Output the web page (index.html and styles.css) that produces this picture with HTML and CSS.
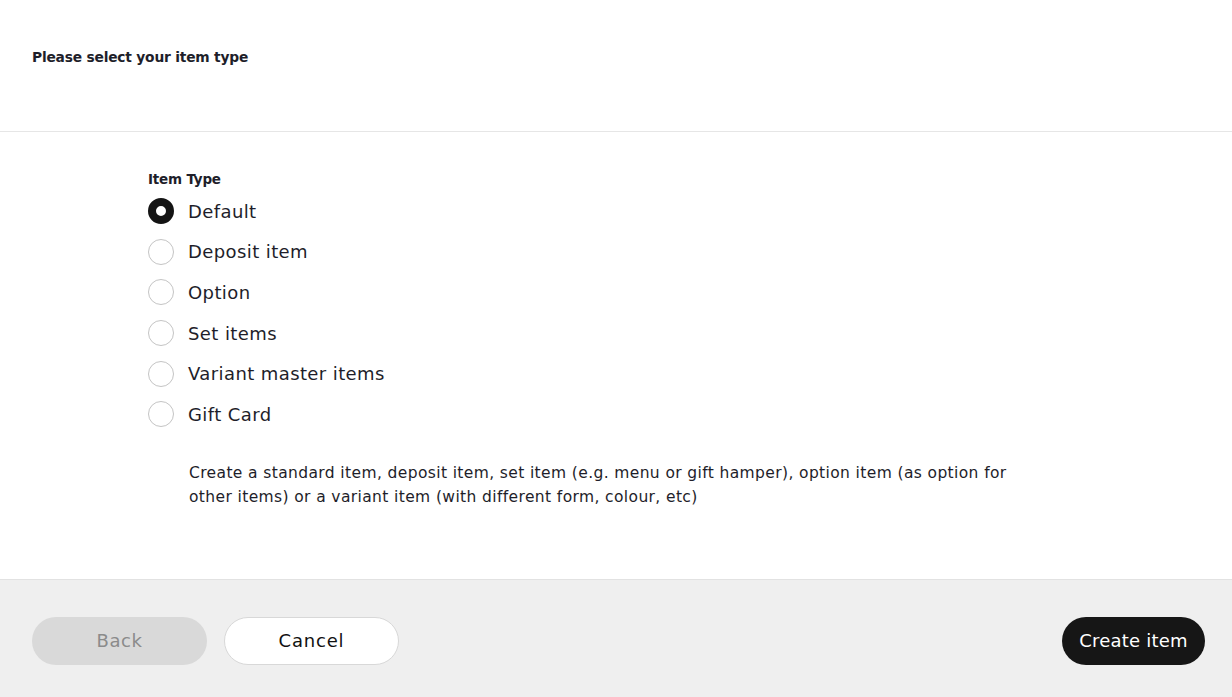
FILE: index.html
```html
<!DOCTYPE html>
<html>
<head>
<meta charset="utf-8">
<link rel="stylesheet" href="styles.css">
</head>
<body>
<div class="page">
  <header class="header">
    <h1 class="title">Please select your item type</h1>
  </header>
  <main class="content">
    <div class="field">
      <div class="field-label">Item Type</div>
      <div class="radios">
        <label class="radio"><span class="dot checked"></span><span class="radio-text">Default</span></label>
        <label class="radio"><span class="dot"></span><span class="radio-text">Deposit item</span></label>
        <label class="radio"><span class="dot"></span><span class="radio-text">Option</span></label>
        <label class="radio"><span class="dot"></span><span class="radio-text">Set items</span></label>
        <label class="radio"><span class="dot"></span><span class="radio-text">Variant master items</span></label>
        <label class="radio"><span class="dot"></span><span class="radio-text">Gift Card</span></label>
      </div>
      <p class="desc">Create a standard item, deposit item, set item (e.g. menu or gift hamper), option item (as option for other items) or a variant item (with different form, colour, etc)</p>
    </div>
  </main>
  <footer class="footer">
    <div class="left">
      <button class="btn btn-back">Back</button>
      <button class="btn btn-cancel">Cancel</button>
    </div>
    <button class="btn btn-create">Create item</button>
  </footer>
</div>
</body>
</html>
```
FILE: styles.css
```css
* { box-sizing: border-box; }
html, body { margin: 0; padding: 0; background: #fff; }
body { font-family: "DejaVu Sans", sans-serif; color: #1c1c28; }
.page { width: 1232px; height: 697px; display: flex; flex-direction: column; }
.header { height: 132px; border-bottom: 1px solid #e6e6e6; padding: 0 32px; display: flex; align-items: flex-start; }
.title { margin: 49px 0 0; font-size: 13.8px; font-weight: 700; letter-spacing: -0.2px; color: #1e1e2a; }
.content { flex: 1; padding: 39px 0 0 148px; }
.field-label { font-size: 13.5px; font-weight: 600; color: #1e1e2a; margin-bottom: 4px; letter-spacing: -0.2px; }
.radios { display: flex; flex-direction: column; }
.radio { display: flex; align-items: center; height: 40.6px; }
.dot { width: 26px; height: 26px; border-radius: 50%; border: 1.5px solid #c4c4c4; background: #fff; flex: none; margin-right: 14px; }
.dot.checked { border: 8px solid #141414; background: #fff; }
.radio-text { font-size: 18px; color: #1e1e2a; letter-spacing: 0.4px; }
.desc { margin: 26px 0 0 41px; width: 830px; font-size: 15.5px; line-height: 24px; color: #1e1e2a; letter-spacing: 0.38px; }
.footer { height: 118px; background: #efefef; border-top: 1px solid #e2e2e2; display: flex; justify-content: space-between; align-items: flex-start; padding: 37px 27px 0 32px; }
.left { display: flex; gap: 17px; }
.btn { font-family: inherit; height: 48px; border-radius: 24px; font-size: 18px; border: 1px solid transparent; cursor: pointer; padding: 0 0 2px; }
.btn-back { width: 175px; background: #d9d9d9; color: #8b8b8b; letter-spacing: 0.6px; }
.btn-cancel { width: 175px; background: #fff; border-color: #d8d8d8; color: #111; letter-spacing: 0.8px; }
.btn-create { width: 143px; background: #161616; color: #fff; letter-spacing: 0.2px; }
```
